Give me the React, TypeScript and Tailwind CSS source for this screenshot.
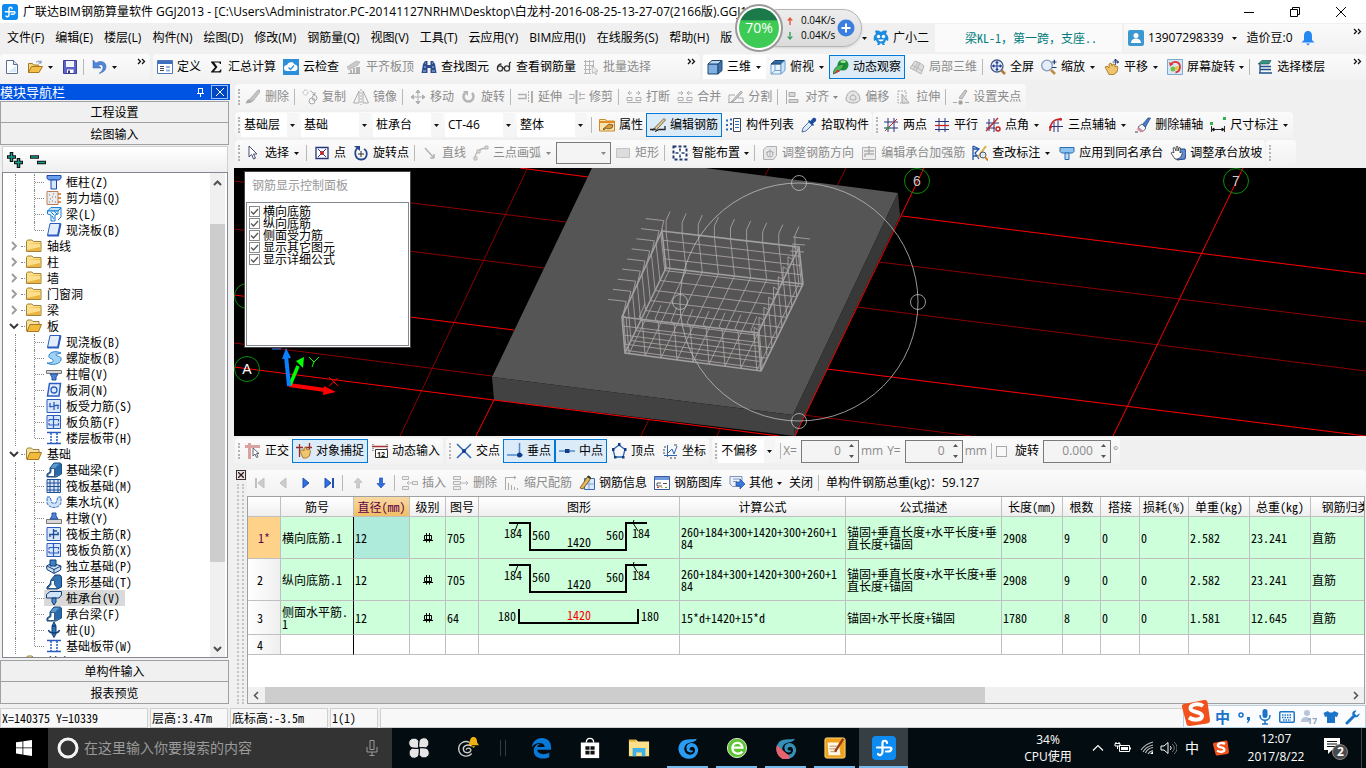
import { useState, type ReactNode } from 'react'

const SONG = "font-['Noto_Sans_Mono_CJK_SC','Noto_Sans_CJK_SC',monospace]"

/* ---------- 16x16 icons ---------- */

const icons: Record<string, ReactNode> = {
  fresh: (
    <>
      <path d="M2.500 1.500h7l4 4v9h-11z" fill="#fff" stroke="#5a6f96" />
      <path d="M9.500 1.500v4h4" fill="#cfe0f5" stroke="#5a6f96" />
      <path d="M4 13l8-6v6z" fill="#dbe8f8" />
    </>
  ),
  open: (
    <>
      <path d="M1.500 13.500V4.500h4l1 1.500h5v3" fill="#f7d77a" stroke="#a9791f" />
      <path d="M1.500 13.500l3-6h11l-3.500 6z" fill="#f3c14b" stroke="#a9791f" />
      <path d="M9 3.500c2-2 4-1.500 5 .5m0 0V1.500m0 2.500h-2.500" fill="none" stroke="#6b86b0" />
    </>
  ),
  save: (
    <>
      <path d="M1.500 1.500h13v13h-13z" fill="#5f63c9" stroke="#3c3f96" />
      <path d="M4 2h8v6H4z" fill="#f0f3fb" />
      <path d="M5 10.500h6.500V14H5z" fill="#fff" />
      <path d="M6 11.500h2V14H6z" fill="#30337e" />
    </>
  ),
  undo: <path d="M2 1v8h8L7.300 6.500C10 5 12.500 6 12 9c-.3 2.500-2 4-4 5.500 4.500-1 7-3.500 7-7 0-5-6.500-6.500-10-3.300z" fill="#4f86d8" stroke="#2a5eb0" strokeWidth=".5" />,
  define: (
    <>
      <path d="M.5 1.500h15v13H.5z" fill="#fff" stroke="#5077b8" />
      <path d="M1 2h14v3H1z" fill="#3e6fc0" />
      <path d="M3 7.500h4M3 9.500h4M3 11.500h4" stroke="#445" />
      <path d="M9 7h4v2H9zM9 10.500h4v2H9z" fill="#8fb0e4" />
    </>
  ),
  sigma: <path d="M3 2.500h10V5h-1c-.5-1.200-1-1.400-2-1.400H6.200L9.500 8 6 12.200h4.500c1 0 1.500-.6 1.800-1.700H13.500L13 13.500H3v-.8L7 8.300 3 3.200z" fill="#111" />,
  cloud: (
    <>
      <path d="M0 0h16v16H0z" fill="#2b8fd9" />
      <path d="M4 12a3 3 0 010-6 4 4 0 017.500-.5A3.300 3.300 0 0112 12z" fill="#fff" />
      <path d="M5.500 8.500l2 2 3.500-4" fill="none" stroke="#2b8fd9" strokeWidth="1.300" />
    </>
  ),
  flat: (
    <>
      <path d="M1 8l9-6 4 1-2 3-9 5z" fill="#c9c9c9" stroke="#aaa" strokeWidth=".6" />
      <path d="M4 11h2v3H4zM7 9h2v5H7zM10 8h4v6h-4z" fill="#b4b4b4" />
      <path d="M2 14.500h12" stroke="#aaa" />
    </>
  ),
  find: (
    <>
      <path d="M2 5l2-3h2.500v4h3V2H12l2 3 1.500 9H9.500V9h-3v5H.5z" fill="#2c4d8c" />
      <path d="M3 8h2M11 8h2M2 12h3M11 12h3M4 4h1M11 4h1" stroke="#a9c4ee" />
    </>
  ),
  glasses: (
    <g fill="none" stroke="#333" strokeWidth="1.300">
      <circle cx="4" cy="9.500" r="2.600" />
      <circle cx="11" cy="9.500" r="2.600" />
      <path d="M6.500 9h2M1.500 9c0-3 2-4 4-4M13.500 9V4l1.500-1" />
    </g>
  ),
  batch: (
    <>
      <path d="M1 2.500h10M1 6.500h10M1 10.500h7M1 14.500h7M2.500 1v14M6.500 1v14M10.500 1v7" stroke="#b5b5b5" />
      <path d="M9 7l6 5-2.500.3L14 15l-1.500.5-1-2.500-2 1.500z" fill="#eee" stroke="#aaa" strokeWidth=".7" />
    </>
  ),
  cube: (
    <>
      <path d="M1 5h10v10H1z" fill="#7fb2e2" stroke="#24466e" />
      <path d="M1 5l4-3.500h10L11 5z" fill="#b7d8f5" stroke="#24466e" />
      <path d="M11 5l4-3.500v10L11 15z" fill="#3a74ad" stroke="#24466e" />
    </>
  ),
  cubeTop: (
    <>
      <path d="M1 5h10v10H1z" fill="#eaf3fc" stroke="#6d9fd0" />
      <path d="M1 5l4-3.500h10L11 5z" fill="#2d6ba8" stroke="#24466e" />
      <path d="M11 5l4-3.500v10L11 15z" fill="#cfe3f6" stroke="#6d9fd0" />
      <path d="M5 11.500V6M5 11.500L1 15M5 11.500h6" stroke="#6d9fd0" />
    </>
  ),
  orbit: (
    <>
      <circle cx="10" cy="6" r="5.500" fill="#1f8f3a" />
      <path d="M7 2.500c2-2 5-1.500 6 0-1 2-4 2-6 0z" fill="#9be29b" />
      <path d="M0 15c1-6 5-10 11-10-1 5-5 8-11 10z" fill="#49b85a" stroke="#14602a" strokeWidth=".7" />
      <path d="M0 15l5-4.500 2 1.500-4 2z" fill="#d33" />
    </>
  ),
  localCube: (
    <g fill="#ddd" stroke="#b5b5b5">
      <path d="M1 9l5-7 5 2-4 8z" />
      <path d="M7 12l4-8 4 3-3 8z" />
      <path d="M3 6l6 3 4 3M4 11l5-8" fill="none" />
    </g>
  ),
  full: (
    <>
      <circle cx="7" cy="7" r="6" fill="#e8f0fb" stroke="#4a5c86" strokeWidth="1.300" />
      <path d="M11.500 11.500l3.500 3.500" stroke="#b07a37" strokeWidth="2.500" />
      <path d="M7 2.500v9M2.500 7h9M7 2.500L5.800 4h2.400zM7 11.500L5.800 10h2.400zM2.500 7L4 5.800v2.400zM11.500 7L10 5.800v2.400z" fill="#1c3f94" stroke="#1c3f94" />
    </>
  ),
  zoom: (
    <>
      <circle cx="6" cy="6.500" r="5.300" fill="#e4eefb" stroke="#8a9ab8" strokeWidth="1.300" />
      <path d="M10 11l4 4" stroke="#c08a3f" strokeWidth="2.500" />
      <path d="M11 3h4.500M13.300 .8v4.400M11 8.500h4.500" stroke="#1e3c78" strokeWidth="1.200" />
    </>
  ),
  pan: (
    <>
      <path d="M1 8l2-1 2 2V5l2-1 1 3 1-2 2 .5V8l2-1 1 1-1 5-3 2.500H5z" fill="#efc46c" stroke="#a06f1a" strokeWidth=".8" />
      <path d="M11.500 0v6M8.500 3h6M11.500 0l-1.200 1.500h2.400zM14.800 3l-1.500-1.200v2.400z" stroke="#23407e" fill="#23407e" strokeWidth=".8" />
    </>
  ),
  screenRot: (
    <>
      <path d="M.5.500h15v15H.5z" fill="#d5e8f7" stroke="#7fa9cc" />
      <circle cx="6" cy="10" r="2.500" fill="#6fbf4b" />
      <circle cx="10" cy="9" r="2" fill="#e8c53a" />
      <path d="M4 5c3-4 9-2 9 3 0 3-2 5-4.500 5.500" fill="none" stroke="#e03030" strokeWidth="1.800" />
      <path d="M2 3l1 4.500L6.500 5z" fill="#e03030" />
    </>
  ),
  floors: (
    <>
      <path d="M1 5l4-3.500h9L12 5z" fill="#2f9c7a" stroke="#1b3c6a" strokeWidth=".6" />
      <path d="M3 7.500h11M3 10.500h11M2 14h13" stroke="#1f4f8a" strokeWidth="1.600" />
      <path d="M3 5v9" stroke="#1f4f8a" strokeWidth="1.300" />
    </>
  ),
  gPen: (
    <>
      <path d="M5 10L13 1h1.500v2.500L8 12z" fill="#c4c4c4" stroke="#a9a9a9" strokeWidth=".8" />
      <path d="M4 10l4 2.500c-2 2-5 1.500-7.500 2 1-1.500 1-3.500 3.500-4.500z" fill="#aaa" />
    </>
  ),
  gCopy: (
    <g fill="none" stroke="#aaa">
      <circle cx="3.500" cy="3.500" r="2.500" strokeDasharray="1.500 1" />
      <circle cx="10" cy="12" r="3" />
      <circle cx="12.500" cy="9" r="2.500" />
      <path d="M8 1.500l5 4m0 0V3m0 2.500h-2.500" />
    </g>
  ),
  gMirror: (
    <g fill="none" stroke="#aaa">
      <path d="M6 2v12H.5zM10 2v12h5.500z" />
      <path d="M8 0v16" strokeDasharray="2 1" />
    </g>
  ),
  gMove: <path d="M8 1v14M1 8h14M8 1L6 3.500h4zM8 15l-2-2.500h4zM1 8l2.500-2v4zM15 8l-2.500-2v4z" fill="#b0b0b0" stroke="#b0b0b0" />,
  gRotate: (
    <>
      <path d="M4 4a5 5 0 107 0" fill="none" stroke="#b5b5b5" strokeWidth="2.500" />
      <path d="M2 2h5v5z" fill="#b5b5b5" />
    </>
  ),
  gExtend: (
    <g fill="none" stroke="#b0b0b0">
      <path d="M0 5.500h8V9.500H0" strokeWidth="1.300" />
      <path d="M10.500 2v12" strokeDasharray="2 1" />
      <path d="M14 2v12" strokeWidth="2" />
    </g>
  ),
  gTrim: (
    <g fill="none" stroke="#b0b0b0">
      <path d="M0 5.500h5v4H0M10 5.500h6M10 9.500h6" />
      <path d="M7.500 1v14" strokeWidth="2" />
      <path d="M11 3v9" strokeDasharray="2 1" />
    </g>
  ),
  gBreak: (
    <g fill="none" stroke="#aeaeae">
      <path d="M2 4h4M10 4h4M2 4l2-2M2 4l2 2M14 4l-2-2M14 4l-2 2M1 13.500h14" />
      <path d="M1 8.500h5v3H1zM10 8.500h5v3h-5z" />
    </g>
  ),
  gMerge: (
    <g fill="none" stroke="#aeaeae">
      <path d="M1 4h5M10 4h5M6 4L4 2M6 4L4 6M10 4l2-2M10 4l2 2M1 13.500h14" />
      <path d="M1 8.500h5v3H1zM10 8.500h5v3h-5z" />
    </g>
  ),
  gSplit: (
    <g fill="none" stroke="#a8a8a8">
      <path d="M0 13.500h16M1 6h6M10 9h5v4M1 6v7" />
      <path d="M3 13L13 2l1.500 1.500L6 12z" fill="#ccc" />
    </g>
  ),
  gAlign: (
    <g fill="#d8d8d8" stroke="#aaa">
      <path d="M1.500 1v14" />
      <path d="M4 3.500h6v4H4zM4 10.500h9v3H4z" />
    </g>
  ),
  gOffset: (
    <g fill="#e4e4e4" stroke="#a8a8a8">
      <path d="M1 11c0-5 3-9 7-9s7 4 7 9c-2 4-12 4-14 0z" />
      <path d="M5 10c0-2 1-4 3-4s3 2 3 4c-1 1.500-5 1.500-6 0z" />
    </g>
  ),
  gStretch: (
    <g fill="none" stroke="#aaa">
      <path d="M2 2h8v12H2z" strokeDasharray="2 1" />
      <path d="M6 5l7 9H6z" fill="#ddd" />
    </g>
  ),
  gGrip: (
    <g fill="none" stroke="#a8a8a8">
      <path d="M0 13.500h4M12 13.500h4" />
      <path d="M6 9L12 1l2 1-5 8z" fill="#ccc" />
      <path d="M6 12h3v3H6z" fill="#999" />
    </g>
  ),
  props: (
    <>
      <path d="M.5 2.500h6l1 1.500h8v10H.5z" fill="#fbe3ab" stroke="#c98b2b" />
      <path d="M1 5h14" stroke="#e08c28" strokeWidth="2" />
      <path d="M4 12l6-5 4 1-1 3-4 1-2-1-2 2z" fill="#d49a3c" stroke="#5b3d10" strokeWidth=".7" />
    </>
  ),
  editRebar: (
    <>
      <path d="M0 12.500h3M5 14.500l4-2h6V9" fill="none" stroke="#222" strokeWidth="1.300" />
      <path d="M4 11.500L14 1.500l1.500 1.500L6.500 12.500z" fill="#e8cf9a" stroke="#5b4a2a" strokeWidth=".8" />
      <path d="M2 14l1.500-3L6.500 12.500z" fill="#333" />
    </>
  ),
  list: (
    <>
      <path d="M0 3.500h2M0 8h2M0 12.500h2M4 2.500h2M4 7h2M4 12h2" stroke="#2f6ab8" strokeWidth="2" />
      <path d="M7.500 1.500h7v13h-7z" fill="#fff" stroke="#445" />
      <path d="M9 4.500h4M9 7.500h4M9 10.500h4" stroke="#2f6ab8" />
    </>
  ),
  picker: (
    <>
      <path d="M1 15l1-4 6-6 3 3-6 6z" fill="#dbeafa" stroke="#33528a" strokeWidth=".8" />
      <path d="M7 4l5 5 1-1-1-1.500L15 4c1-2-1-4-3-3L9.500 4 8 3z" fill="#1d4f9c" />
    </>
  ),
  twoPt: (
    <>
      <path d="M5 1v14M11 1v14M1 5h14M1 11h14" stroke="#26357c" />
      <path d="M2 14L14 2" stroke="#cc2222" />
      <circle cx="5" cy="11" r="1.600" fill="#1f9c3a" />
    </>
  ),
  parallel: (
    <>
      <path d="M5 1v14M11 1v14M1 4.500h14" stroke="#26357c" />
      <path d="M1 8.500h14" stroke="#cc2222" strokeWidth="1.300" />
      <path d="M1 12.500h14" stroke="#26357c" />
    </>
  ),
  angle: (
    <>
      <path d="M4 2v12M9 1v14M1 6h13M1 11h9" stroke="#26357c" />
      <path d="M1 14L13 1" stroke="#cc2222" strokeWidth="1.300" />
      <circle cx="13" cy="12" r="2" fill="none" stroke="#cc2222" strokeWidth="1.500" />
    </>
  ),
  threePt: (
    <>
      <path d="M6 5v10M10 3v12M2 9.500h13" stroke="#26357c" />
      <path d="M2 14C2 6 6 2 13 2" fill="none" stroke="#cc2222" strokeWidth="1.500" />
      <circle cx="12.500" cy="2.200" r="1.500" fill="#cc2222" />
      <circle cx="2.500" cy="10" r="1.500" fill="#cc2222" />
    </>
  ),
  eraseAxis: (
    <>
      <path d="M7 8L13 1h2.500L10 11z" fill="#4879c9" stroke="#22438a" strokeWidth=".7" />
      <path d="M3 10l4-3 4 4-3 3.500z" fill="#f1f4fa" stroke="#445" strokeWidth=".8" />
      <path d="M3 10l5 4.500-2 1-4-3z" fill="#d98a9a" />
      <path d="M0 15h3" stroke="#445" />
    </>
  ),
  dims: (
    <>
      <path d="M1.500 9v6M14.500 9v6M2 12.500h12M2 12.500l2-1.500v3zM14 12.500L12 11v3z" stroke="#111" fill="#111" strokeWidth=".9" />
      <path d="M0 5h3v3H0zM13 0h3v3h-3z" fill="#35b04a" />
    </>
  ),
  cursor: <path d="M4 1v11l2.700-2.500L8.500 14l2-.8-2-4.200H12z" fill="#fff" stroke="#444f70" />,
  point: (
    <>
      <path d="M2 2.500h12v11H2z" fill="#fff" stroke="#26357c" strokeWidth="1.300" />
      <path d="M4 4l8 8M12 4l-8 8" stroke="#26357c" />
      <circle cx="8" cy="8" r="2" fill="#cc2222" />
    </>
  ),
  rotPoint: (
    <>
      <path d="M5 3C1 5 1 14 8 14.500S15 6 11 4" fill="none" stroke="#26488f" strokeWidth="1.800" />
      <path d="M1 1h6v5z" fill="#26488f" />
      <path d="M8 6v6M5 9h6" stroke="#333" />
    </>
  ),
  gLine: <path d="M3 3l9 10m0 0V9m0 4H8" fill="none" stroke="#b5b5b5" strokeWidth="1.600" />,
  gArc: (
    <g stroke="#b5b5b5" fill="#ddd">
      <path d="M2 14C2 7 7 3 14 3" fill="none" strokeWidth="1.300" />
      <path d="M1 12h3v3H1zM4 5h3v3H4zM12 1h3v3h-3z" />
    </g>
  ),
  gRect: <path d="M1.500 3.500h13v9h-13z" fill="#dcdcdc" stroke="#c4c4c4" />,
  smart: (
    <>
      <path d="M1.500 1.500h13v13h-13z" fill="#fff" stroke="#223a70" strokeWidth="2" strokeDasharray="3 2" />
      <path d="M8 3.500v3M8 9.500v3M3.500 8h3M9.500 8h3" stroke="#223a70" strokeWidth="1.300" />
      <path d="M7 5l1-1.500L9 5zM7 11l1 1.500 1-1.500z" fill="#223a70" />
    </>
  ),
  gDir: (
    <g fill="#e6e6e6" stroke="#b0b0b0">
      <path d="M1.500 4.500L5 1.500h9.500v9l-3 4h-10z" />
      <path d="M8 4v8M4 8c2-2 6-2 8 0" fill="none" />
      <circle cx="8" cy="9" r="3" fill="none" />
    </g>
  ),
  gEdit: (
    <g fill="#eee" stroke="#b0b0b0">
      <path d="M1.500 2.500h13v12h-13z" />
      <path d="M8 1v8H4v3M8 9h5M3 6h10" fill="none" strokeWidth="1.500" />
    </g>
  ),
  checkDim: (
    <>
      <path d="M1 1v14M1 4h6M1 11h5M1 1l6 3-4 4 4 6" stroke="#2455a8" fill="none" strokeWidth="1.300" />
      <path d="M14 1L6 12" stroke="#d9b14a" strokeWidth="2" />
      <circle cx="11" cy="10" r="3" fill="#dcebfa" stroke="#555" />
      <path d="M13 12l3 3.500" stroke="#d08a2c" strokeWidth="2" />
    </>
  ),
  applyCap: (
    <>
      <path d="M1 2.500h14v4l-1.500 1.500h-11L1 6.500z" fill="#8cc4ef" stroke="#2a6db0" />
      <path d="M6 8h4v6.500H6z" fill="#b5daf6" stroke="#2a6db0" />
    </>
  ),
  slope: (
    <>
      <path d="M8 4h7l1 4-1 6-8 1z" fill="#5f8fd8" stroke="#1f478e" />
      <path d="M1 8l2-1 1 1-1-5 1.500-.5L6 6l.3-4.500h1.500L8 6l1-3.500 1.300.3L10 8l1.500-1 1 1-2 4.500-3 1.500H5z" fill="#fff" stroke="#333" strokeWidth=".8" />
    </>
  ),
  ortho: (
    <>
      <path d="M0 3.500h15M4.500 0v16" stroke="#d9a2a0" strokeWidth="3" />
      <path d="M8 5v8l2-2 1.500 3.500 1.500-.7-1.500-3.300H14z" fill="#fff" stroke="#556" strokeWidth=".9" />
    </>
  ),
  snap: (
    <>
      <path d="M0 4.500h7M3.500 1v13M13.500 0v6M9 4.500h7" stroke="#9b2b2b" strokeWidth="1.300" />
      <path d="M4 8l2-1.500L8 8V5l2-1 1 3 2-1 1.500 2-1 5-3 2H7z" fill="#efc66f" stroke="#94661b" strokeWidth=".8" />
    </>
  ),
  dyn: (
    <>
      <path d="M0 3.500h16" stroke="#a33" strokeWidth="1.500" />
      <path d="M1 1v8M15 1v8" stroke="#444" strokeDasharray="1 1" />
      <path d="M3.500 6.500h12v8h-12z" fill="#fff" stroke="#333" />
      <text x="5" y="13.500" fontSize="7" fontWeight="bold" fill="#111">12</text>
    </>
  ),
  cross: (
    <>
      <path d="M1 1l14 14M15 1L1 15" stroke="#2a66b5" strokeWidth="1.500" />
      <circle cx="8" cy="8" r="2" fill="#133d80" />
    </>
  ),
  perp: (
    <>
      <path d="M0 12h16M12.500 0v12" stroke="#4f8bd0" strokeWidth="1.500" />
      <circle cx="12.500" cy="12" r="2.500" fill="#133d80" />
    </>
  ),
  mid: (
    <>
      <path d="M0 8h16" stroke="#4f8bd0" strokeWidth="1.500" />
      <path d="M6 6h4.500v4H6z" fill="#133d80" />
    </>
  ),
  vertex: (
    <>
      <path d="M8 2l6 4.500-2 7.500H4L2 6.500z" fill="none" stroke="#2a66b5" strokeWidth="1.300" />
      <path d="M7 0h2.500v3H7zM1 5h2.500v3H1zM13 5h2.500v3H13zM3 13h2.500v2.500H3zM11 13h2.500v2.500H11z" fill="#133d80" />
    </>
  ),
  coord: (
    <>
      <path d="M5.500 2v12M2 12.500h13M6 10l4-4 2 5 3-8" fill="none" stroke="#2a66b5" />
      <path d="M2 4h2M1 7h2M1 10h2M12 2h3M8 15h2M12 15h2" stroke="#444" />
    </>
  ),
  first: (
    <g fill="#ccc" stroke="#c0c0c0">
      <path d="M4 3v10" strokeWidth="2" />
      <path d="M12 3v10L6 8z" />
    </g>
  ),
  prev: <path d="M11 3v10L5 8z" fill="#ccc" stroke="#c0c0c0" />,
  next: <path d="M5 3v10l6-5z" fill="#2d6fe0" stroke="#1d50b5" />,
  last: (
    <g fill="#2d6fe0" stroke="#1d50b5">
      <path d="M4 3v10l6-5z" />
      <path d="M12 3v10" strokeWidth="2" />
    </g>
  ),
  up: <path d="M8 3l4 4.500H9.500V13h-3V7.500H4z" fill="#ccc" stroke="#bbb" strokeWidth=".7" />,
  down: <path d="M8 13l4-4.500H9.500V3h-3v5.500H4z" fill="#2d6fe0" stroke="#1d50b5" strokeWidth=".7" />,
  gInsert: (
    <g fill="#eee" stroke="#b5b5b5">
      <path d="M.5 1.500h6v3h-6zM.5 11.500h6v3h-6zM10.500 6.500h5v3h-5z" />
      <path d="M10 8H5m0 0l2-2M5 8l2 2" fill="none" />
    </g>
  ),
  gDelete: (
    <g fill="#eee" stroke="#b5b5b5">
      <path d="M.5 1.500h7v3h-7zM.5 6.500h7v3h-7zM.5 11.500h7v3h-7z" />
      <path d="M8 8h7m0 0l-2-2m2 2l-2 2" fill="none" />
    </g>
  ),
  gScale: (
    <g fill="none" stroke="#aaa">
      <path d="M1.500 2v13M4.500 8v7M7.500 10v5M10.500 12v3M13.500 13v2M2 2.500h10m0 0l-2-1.500m2 1.500l-2 1.500" />
    </g>
  ),
  info: (
    <>
      <path d="M5.500 3.500h10v11h-10z" fill="#dce8f8" stroke="#3a6ab0" />
      <path d="M10 4v10M6 9h9" stroke="#7fa5dc" />
      <path d="M1 13L9 1l3 2-8 11z" fill="#e7b95a" stroke="#6a4a18" strokeWidth=".8" />
      <path d="M8 2l3 2 1-1.500L9.500.500z" fill="#333" />
    </>
  ),
  gallery: (
    <>
      <path d="M.5 1.500h15v13H.5z" fill="#fff" stroke="#38599b" />
      <path d="M1 2h14v3H1z" fill="#6f9add" />
      <path d="M3 8h4M3 8v3h5M9 8.500h4" stroke="#555" fill="none" />
      <path d="M3 12.500h2" stroke="#d33" /><path d="M7 12.500h2" stroke="#e8b93a" /><path d="M11 12.500h2" stroke="#39a845" />
    </>
  ),
  other: (
    <>
      <path d="M1 1.500h12v10H3.500L1 9z" fill="#eef3fb" stroke="#7c93bd" />
      <path d="M4 4h7M4 6.500h4" stroke="#7c93bd" />
      <path d="M7 7h4V4l5 5-5 5v-3H7z" fill="#3c78d8" stroke="#1d4b9e" strokeWidth=".7" />
    </>
  ),
  folder: (
    <>
      <path d="M.5 3.500l1-1.500h4.500l1.500 1.500h7.500v10H.5z" fill="#fbe08c" stroke="#9f823c" />
      <path d="M1 6l13.500-1v8H1z" fill="#eab541" />
      <path d="M1 6h13v3L1 12z" fill="#fbdf8d" />
    </>
  ),
  folderOpen: (
    <>
      <path d="M.5 13V3.500l1-1.500h4l1.500 1.500h6V6" fill="#f4e0a0" stroke="#9f823c" />
      <path d="M1 13.500l3-7h11.500l-3 7z" fill="#f2bb3c" stroke="#a8781c" />
    </>
  ),
  column: (
    <>
      <path d="M1 1.500h14v3l-2 1.500H3L1 4.500z" fill="#6ba0ea" stroke="#1c48a8" />
      <path d="M5 6h5.500v9H5z" fill="#d6e6fb" stroke="#1c48a8" />
    </>
  ),
  shear: (
    <>
      <path d="M1 1.500h11v13H1z" fill="#ececec" stroke="#c07a58" />
      <path d="M3 5h1M7 4h1M9 7h1M4 9h1M6 11h1M9 12h1M3 12h1M6 7h1" stroke="#777" />
      <path d="M12 4h3M12 8h3M12 12h3" stroke="#c8702e" strokeWidth="1.500" />
    </>
  ),
  beam: (
    <>
      <path d="M1.500 5L5 1.500h10L12 5z" fill="#bfe0fa" stroke="#1d7fd0" />
      <path d="M1.500 5H12v3l-3 1v6H5V9L1.500 8z" fill="#e6f4ff" stroke="#1d7fd0" />
      <path d="M5 6l3 3M8 5l3 3M6 10l2 3M12 5l3-3v9l-3 3" fill="none" stroke="#1d7fd0" />
    </>
  ),
  slab: (
    <>
      <path d="M4 1.500h10.500L12 13.500H1.500z" fill="#e3eefc" stroke="#2b5cc0" />
      <path d="M1.500 13.500h10.500l2.500-12" fill="none" stroke="#2b5cc0" strokeWidth="2" />
    </>
  ),
  spiral: <path d="M3 5c2-4 8-4 12-2-3 1-6 1-5 2 2 2 6 1 5 5-1 4-9 6-14 3 4 0 7-1 6-3C6 8 2 9 3 5z" fill="#9fd2f5" stroke="#2a82cc" />,
  capital: (
    <>
      <path d="M.5 4.500h15v3H.5z" fill="#d5d5d5" stroke="#777" />
      <path d="M4 8h8l-2 3v3H6v-3z" fill="#4f86d8" stroke="#214f9e" />
    </>
  ),
  slabHole: (
    <>
      <path d="M3.500 1.500h11l-1.500 12.500H1.500z" fill="#e3eefc" stroke="#2b5cc0" strokeWidth="1.500" />
      <circle cx="8" cy="8" r="3" fill="none" stroke="#2b5cc0" strokeWidth="1.300" />
    </>
  ),
  slabBar: (
    <>
      <path d="M1 1.500h13.500v13H1z" fill="#d9e7fb" stroke="#2b5cc0" />
      <path d="M8 4v8M3 8c2 3 8-3 10 0M4 5v3M12 8v3" fill="none" stroke="#2b5cc0" strokeWidth="1.300" />
    </>
  ),
  slabNeg: (
    <>
      <path d="M1 1.500h13.500v13H1z" fill="#d9e7fb" stroke="#2b5cc0" />
      <path d="M7.500 2v12M3 5.500h9.500v2M3 7.500v-2M3 11h9.500V9M3 9v2" fill="none" stroke="#2b5cc0" strokeWidth="1.200" />
    </>
  ),
  strip: (
    <>
      <path d="M1 2.500h14M1 13.500h14" stroke="#2b5cc0" strokeWidth="1.500" />
      <path d="M5 3v10M11 3v10" stroke="#2b5cc0" strokeDasharray="2 1" strokeWidth="1.500" />
    </>
  ),
  fBeam: (
    <>
      <path d="M1 15v-3l3-2V6l4-5h6l1.500 1v10L10 15z" fill="#5b9bd5" stroke="#123f74" />
      <path d="M9 14V6l5-5 1.500 1v10z" fill="#2a68a8" />
      <path d="M2 14.500v-2l3-2V6.500h3.500v8z" fill="#fff" stroke="#123f74" strokeWidth=".8" />
    </>
  ),
  raft: (
    <>
      <path d="M1 1.500h13.500v13H1z" fill="#d9e7fb" stroke="#1f4f96" />
      <path d="M4 2v12M8 2v12M12 2v12M1 5h13M1 8.500h13M1 12h13" stroke="#1f4f96" />
    </>
  ),
  pit: <path d="M1 3h3l2 6h4l2-6h3v6c-2 6-12 6-14 0z" fill="#cfe2f8" stroke="#2b6cc0" strokeDasharray="3 1" />,
  pier: (
    <>
      <path d="M.5 9.500h15v4H.5z" fill="#d8d8d8" stroke="#777" />
      <path d="M4 9l2-3V3h4v3l2 3z" fill="#4f86d8" stroke="#214f9e" />
    </>
  ),
  raftMain: (
    <>
      <path d="M1 1.500h13.500v13H1z" fill="#d9e7fb" stroke="#2b5cc0" />
      <path d="M7.500 3v10M7.500 5H11M3 8.500h10M4 8.500V11M12 8.500V6" fill="none" stroke="#1f4f96" strokeWidth="1.300" />
    </>
  ),
  isolated: (
    <>
      <path d="M.5 8L6 5l9 3-.5 4L8 15.500 1 11.500z" fill="#c9e0f7" stroke="#123f74" />
      <path d="M4 2h6v6H4z" fill="#3c83c6" stroke="#123f74" />
      <path d="M1 8l7 3.500 7-3.500M8 11.500V15" fill="none" stroke="#123f74" />
    </>
  ),
  stripF: (
    <>
      <path d="M1 15v-2l3-3 1-4 4-5h5l1.500 2v10l-4 2z" fill="#2f74b5" stroke="#123f74" />
      <path d="M1.500 14.500l3.500-4V6.500h3.500v4l3 4z" fill="#fff" stroke="#123f74" strokeWidth=".8" />
    </>
  ),
  cap: (
    <>
      <path d="M.5 4.500L4 1.500h11.500v3.500L13 8H.5z" fill="#cfe4f8" stroke="#123f74" />
      <path d="M6 8h4v4l-2 3-2-3z" fill="#4c8bcb" stroke="#123f74" />
    </>
  ),
  pile: (
    <>
      <path d="M8 0l2 4H6zM6 4h4v8l-2 3.500L6 12z" fill="#2f74b5" stroke="#123f74" />
      <path d="M2.500 8c1 4 10 4 11 0" fill="none" stroke="#123f74" strokeWidth="1.500" />
    </>
  ),
}

function Icon({ name }: { name: string }) {
  return (
    <svg viewBox="0 0 16 16" className="h-4 w-4 shrink-0" aria-hidden="true">
      {icons[name]}
    </svg>
  )
}

function Caret({ gray = false }: { gray?: boolean }) {
  return (
    <svg viewBox="0 0 5 3" className="h-[3px] w-[5px] shrink-0" aria-hidden="true">
      <path d="M0 0h5L2.500 3z" fill={gray ? '#888' : '#111'} />
    </svg>
  )
}

/* ---------- toolbar parts ---------- */

interface ToolProps {
  icon?: string
  label?: string
  off?: boolean
  active?: boolean
  caret?: 'menu' | 'split'
}

function Tool({ icon, label, off, active, caret }: ToolProps) {
  return (
    <button
      type="button"
      aria-label={label ?? icon}
      className={`flex h-6 shrink-0 items-center whitespace-nowrap ${off ? 'text-[#8b8b8b]' : 'text-black'} ${
        active ? 'border border-[#0078d7] bg-[#dcebf8] px-[3px]' : caret ? 'pl-1' : 'pr-[3px] pl-1'
      }`}
    >
      {icon && <Icon name={icon} />}
      {label && <span className={icon ? 'pl-1' : ''}>{label}</span>}
      {caret && (
        <span className={`flex justify-center ${caret === 'menu' ? 'w-3' : 'w-[15px]'}`}>
          <Caret gray={off} />
        </span>
      )}
    </button>
  )
}

function Sep() {
  return <span className="mr-[3px] ml-0.5 h-4 w-px shrink-0 bg-[#b8b8b8]" />
}

function Grip() {
  return <span className="mr-px ml-[3px] h-4 shrink-0 border-l-2 border-dotted border-[#b4b4b4]" />
}

function Strip({ children, className = '' }: { children: ReactNode; className?: string }) {
  return (
    <div className={`flex h-[26px] shrink-0 items-center rounded-sm bg-linear-to-b from-[#fbfbfb] to-[#f2f2f2] ${className}`}>
      {children}
    </div>
  )
}

function Combo({ label, value, wide = true }: { label: string; value: string; wide?: boolean }) {
  return (
    <span className={`relative mr-[3px] flex h-6 shrink-0 items-center bg-white ${wide ? 'w-[69px]' : 'w-[57px]'}`}>
      <select aria-label={label} defaultValue={value} className="h-full w-full appearance-none bg-transparent pl-[3px] outline-none">
        <option>{value}</option>
      </select>
      <span className="pointer-events-none absolute inset-y-0 right-0 flex w-[11px] items-center justify-center bg-[#f5f5f5]">
        <Caret />
      </span>
    </span>
  )
}

function More() {
  return (
    <svg viewBox="0 0 9 7" className="mt-1 mr-1 ml-auto h-[7px] w-[9px] shrink-0 self-start" aria-hidden="true">
      <path d="M1 1l2.500 2.500L1 6M5 1l2.500 2.500L5 6" fill="none" stroke="#111" strokeWidth="1.300" />
    </svg>
  )
}

/* ---------- title, menu ---------- */

function GLogo({ className }: { className: string }) {
  return (
    <svg viewBox="0 0 24 24" className={className} aria-hidden="true">
      <rect width="24" height="24" rx="4" fill="#0d8bf0" />
      <path d="M15 7c0-3-4.500-3-4.500 0v9c0 3-3 4-4.500 2M5 11.500h13c2.500 0 1.500 4-2 4h-2" fill="none" stroke="#fff" strokeWidth="2.200" strokeLinecap="round" />
    </svg>
  )
}

function TitleBar() {
  return (
    <header className="flex h-[23px] shrink-0 items-center bg-white pl-0.5">
      <GLogo className="h-4 w-4 shrink-0" />
      <h1 className="ml-[5px] truncate">
        广联达BIM钢筋算量软件 GGJ2013 - [C:\Users\Administrator.PC-20141127NRHM\Desktop\白龙村-2016-08-25-13-27-07(2166版).GGJ12]
      </h1>
      <div className="ml-auto flex shrink-0">
        <button type="button" aria-label="最小化" className="flex h-5 w-[46px] items-center justify-center">
          <svg viewBox="0 0 10 10" className="h-2.5 w-2.5"><path d="M0 5.500h10" stroke="#000" /></svg>
        </button>
        <button type="button" aria-label="还原" className="flex h-5 w-[46px] items-center justify-center">
          <svg viewBox="0 0 10 10" className="h-2.5 w-2.5"><path d="M.5 2.500h7v7h-7zM2.500 2.500v-2h7v7h-2" fill="none" stroke="#000" /></svg>
        </button>
        <button type="button" aria-label="关闭窗口" className="mr-0.5 flex h-5 w-[46px] items-center justify-center">
          <svg viewBox="0 0 10 10" className="h-2.5 w-2.5"><path d="M0 0l10 10M10 0L0 10" stroke="#000" /></svg>
        </button>
      </div>
    </header>
  )
}

const menus = ['文件(F)', '编辑(E)', '楼层(L)', '构件(N)', '绘图(D)', '修改(M)', '钢筋量(Q)', '视图(V)', '工具(T)', '云应用(Y)', 'BIM应用(I)', '在线服务(S)', '帮助(H)', '版']

function MenuBar() {
  return (
    <div className="flex h-[30px] shrink-0 items-center">
      <nav className="flex w-[858px] shrink-0 items-center gap-[11px] overflow-hidden pl-[7px]">
        {menus.map((m) => (
          <button key={m} type="button" className="whitespace-nowrap">{m}</button>
        ))}
      </nav>
      <span className="mr-1.5 ml-1"><Caret /></span>
      <button type="button" className="mr-1.5 flex shrink-0 items-center gap-1">
        <svg viewBox="0 0 16 16" className="h-4 w-4" aria-hidden="true">
          <path d="M2 1c2-1 5 0 6 1 1-1 4-2 6-1l-1 3c2 1 3 4 2 7l-2-1c-.5 2-1.500 3-2 3l1 2H9.500l-.5-1.500H7L6.500 15H4l1-2c-.5 0-1.500-1-2-3l-2 1c-1-3 0-6 2-7z" fill="#1c8ce0" />
          <circle cx="5.500" cy="6.500" r="1.700" fill="#fff" /><circle cx="10.500" cy="6.500" r="1.700" fill="#fff" />
          <path d="M5 9.500c1.500 2.500 4.500 2.500 6 0z" fill="#fff" />
        </svg>
        广小二
      </button>
      <a href="#faq" className={`flex h-7 w-[187px] shrink-0 items-center bg-[#fafafa] pl-[30px] text-[#007c7c] ${SONG}`}>
        梁KL-1，第一跨，支座..
      </a>
      <div className="ml-0.5 flex h-7 flex-1 items-center bg-linear-to-b from-[#fafafa] to-[#f2f2f2] pl-1">
        <svg viewBox="0 0 16 16" className="h-4 w-4 shrink-0" aria-hidden="true">
          <rect width="16" height="16" rx="2" fill="#3d97d0" />
          <circle cx="8" cy="5.500" r="2.500" fill="#fff" />
          <path d="M3 13c0-3 2-4.500 5-4.500s5 1.500 5 4.500z" fill="#fff" />
        </svg>
        <button type="button" className="ml-1 flex items-center gap-2">13907298339 <Caret /></button>
        <span className="ml-2.5 whitespace-nowrap">造价豆:0</span>
        <svg viewBox="0 0 14 16" className="ml-2 h-4 w-3.5 shrink-0" aria-label="通知">
          <path d="M7 1c3 0 4 2.500 4 5v4l2.500 2.500H.5L3 10V6c0-2.500 1-5 4-5zM5 13.500h4L7 15.500z" fill="#2588f2" />
        </svg>
        <More />
      </div>
    </div>
  )
}

function MainToolbar() {
  return (
    <div className="mb-[3px] flex h-7 shrink-0 items-center gap-[3px]">
      <Strip className="w-[150px]">
        <Tool icon="fresh" />
        <Tool icon="open" caret="split" />
        <Tool icon="save" />
        <Sep />
        <Tool icon="undo" caret="split" />
        <More />
      </Strip>
      <Strip className="w-[547px]">
        <Tool icon="define" label="定义" />
        <Tool icon="sigma" label="汇总计算" />
        <Tool icon="cloud" label="云检查" />
        <Tool icon="flat" label="平齐板顶" off />
        <Tool icon="find" label="查找图元" />
        <Tool icon="glasses" label="查看钢筋量" />
        <Tool icon="batch" label="批量选择" off />
        <More />
      </Strip>
      <Strip className="flex-1">
        <span className="flex h-6 bg-white"><Tool icon="cube" label="三维" caret="split" /></span>
        <Tool icon="cubeTop" label="俯视" caret="split" />
        <Tool icon="orbit" label="动态观察" active />
        <Tool icon="localCube" label="局部三维" off />
        <Sep />
        <Tool icon="full" label="全屏" />
        <Tool icon="zoom" label="缩放" caret="split" />
        <Tool icon="pan" label="平移" caret="split" />
        <Tool icon="screenRot" label="屏幕旋转" caret="menu" />
        <Sep />
        <Tool icon="floors" label="选择楼层" />
        <More />
      </Strip>
    </div>
  )
}

function EditToolbars() {
  return (
    <div className="flex shrink-0 flex-col gap-0.5 pb-0.5 pl-px">
      <Strip className="self-start pr-0.5">
        <Grip />
        <Tool icon="gPen" label="删除" off />
        <Sep />
        <Tool icon="gCopy" label="复制" off />
        <Tool icon="gMirror" label="镜像" off />
        <Sep />
        <Tool icon="gMove" label="移动" off />
        <Tool icon="gRotate" label="旋转" off />
        <Sep />
        <Tool icon="gExtend" label="延伸" off />
        <Tool icon="gTrim" label="修剪" off />
        <Sep />
        <Tool icon="gBreak" label="打断" off />
        <Tool icon="gMerge" label="合并" off />
        <Tool icon="gSplit" label="分割" off />
        <Sep />
        <Tool icon="gAlign" label="对齐" off caret="menu" />
        <Tool icon="gOffset" label="偏移" off />
        <Tool icon="gStretch" label="拉伸" off />
        <Sep />
        <Tool icon="gGrip" label="设置夹点" off />
      </Strip>
      <div className="flex gap-px">
        <Strip>
          <Grip />
          <Combo label="楼层" value="基础层" wide={false} />
          <Combo label="构件大类" value="基础" />
          <Combo label="构件类型" value="桩承台" />
          <Combo label="构件" value="CT-46" />
          <Combo label="分层" value="整体" />
          <Sep />
          <Tool icon="props" label="属性" />
          <Tool icon="editRebar" label="编辑钢筋" active />
          <Tool icon="list" label="构件列表" />
          <Tool icon="picker" label="拾取构件" />
        </Strip>
        <Strip>
          <Grip />
          <Tool icon="twoPt" label="两点" />
          <Tool icon="parallel" label="平行" />
          <Tool icon="angle" label="点角" caret="split" />
          <Tool icon="threePt" label="三点辅轴" caret="split" />
          <Tool icon="eraseAxis" label="删除辅轴" />
          <Tool icon="dims" label="尺寸标注" caret="split" />
        </Strip>
      </div>
      <div className="flex gap-px">
        <Strip>
          <Grip />
          <Tool icon="cursor" label="选择" caret="split" />
          <Sep />
          <Tool icon="point" label="点" />
          <Tool icon="rotPoint" label="旋转点" />
          <Sep />
          <Tool icon="gLine" label="直线" off />
          <Tool icon="gArc" label="三点画弧" off caret="split" />
          <span className="relative flex h-[22px] w-[55px] items-center border border-[#7a7a7a] bg-[#f4f4f4]">
            <select aria-label="画弧方式" className="h-full w-full appearance-none outline-none" />
            <span className="pointer-events-none absolute right-1"><Caret gray /></span>
          </span>
          <Tool icon="gRect" label="矩形" off />
          <Sep />
          <Tool icon="smart" label="智能布置" caret="menu" />
          <Sep />
          <Tool icon="gDir" label="调整钢筋方向" off />
          <Tool icon="gEdit" label="编辑承台加强筋" off />
          <Tool icon="checkDim" label="查改标注" caret="split" />
          <Tool icon="applyCap" label="应用到同名承台" />
          <Tool icon="slope" label="调整承台放坡" />
        </Strip>
        <Strip className="w-[30px]">
          <Grip />
        </Strip>
      </div>
    </div>
  )
}

/* ---------- navigation tree ---------- */

interface Node {
  icon: string
  label: string
  state?: 'open' | 'closed'
  last?: boolean
  selected?: boolean
}

const tree: Node[] = [
  { icon: 'column', label: '框柱(Z)' },
  { icon: 'shear', label: '剪力墙(Q)' },
  { icon: 'beam', label: '梁(L)' },
  { icon: 'slab', label: '现浇板(B)', last: true },
  { icon: 'folder', label: '轴线', state: 'closed' },
  { icon: 'folder', label: '柱', state: 'closed' },
  { icon: 'folder', label: '墙', state: 'closed' },
  { icon: 'folder', label: '门窗洞', state: 'closed' },
  { icon: 'folder', label: '梁', state: 'closed' },
  { icon: 'folderOpen', label: '板', state: 'open' },
  { icon: 'slab', label: '现浇板(B)' },
  { icon: 'spiral', label: '螺旋板(B)' },
  { icon: 'capital', label: '柱帽(V)' },
  { icon: 'slabHole', label: '板洞(N)' },
  { icon: 'slabBar', label: '板受力筋(S)' },
  { icon: 'slabNeg', label: '板负筋(F)' },
  { icon: 'strip', label: '楼层板带(H)', last: true },
  { icon: 'folderOpen', label: '基础', state: 'open' },
  { icon: 'fBeam', label: '基础梁(F)' },
  { icon: 'raft', label: '筏板基础(M)' },
  { icon: 'pit', label: '集水坑(K)' },
  { icon: 'pier', label: '柱墩(Y)' },
  { icon: 'raftMain', label: '筏板主筋(R)' },
  { icon: 'slabNeg', label: '筏板负筋(X)' },
  { icon: 'isolated', label: '独立基础(P)' },
  { icon: 'stripF', label: '条形基础(T)' },
  { icon: 'cap', label: '桩承台(V)', selected: true },
  { icon: 'fBeam', label: '承台梁(F)' },
  { icon: 'pile', label: '桩(U)' },
  { icon: 'strip', label: '基础板带(W)', last: true },
  { icon: 'folder', label: '其它', state: 'closed' },
]

function TreeRow({ node }: { node: Node }) {
  if (node.state) {
    return (
      <li className="flex h-4 items-center pl-[5px]">
        <svg viewBox="0 0 12 12" className="h-3 w-3 shrink-0" aria-hidden="true">
          {node.state === 'open' ? (
            <path d="M2 4l4 4 4-4" fill="none" stroke="#333" strokeWidth="1.800" />
          ) : (
            <path d="M4 2l4 4-4 4" fill="none" stroke="#999" strokeWidth="1.800" />
          )}
        </svg>
        <span className="mr-px ml-px w-1 border-t border-dotted border-[#888]" />
        <Icon name={node.icon} />
        <span className="ml-[5px] leading-4">{node.label}</span>
      </li>
    )
  }
  return (
    <li className="flex h-4 items-center pl-3">
      <span className="h-4 w-[19px] border-l border-dotted border-[#888]" />
      <span className={`border-l border-dotted border-[#888] ${node.last ? 'mb-2 h-2' : 'h-4'}`} />
      <span className="w-[9px] border-t border-dotted border-[#888]" />
      <span className={`flex h-4 items-center pr-[5px] pl-0.5 ${node.selected ? 'bg-[#d9d9d9]' : ''}`}>
        <Icon name={node.icon} />
        <span className="ml-1 leading-4">{node.label}</span>
      </span>
    </li>
  )
}

function NavButton({ children }: { children: ReactNode }) {
  return (
    <button type="button" className="h-[22px] w-full shrink-0 border border-[#a0a0a0] bg-[#f0f0f0] leading-5 not-first:border-t-0">
      {children}
    </button>
  )
}

function NavPanel() {
  return (
    <aside className={`flex w-[230px] shrink-0 flex-col ${SONG}`}>
      <div className="flex h-4 shrink-0 items-center bg-[#0054e3] text-[13px] leading-4 text-white">
        模块导航栏
        <svg viewBox="0 0 9 10" className="ml-auto h-2.5 w-[9px]" aria-label="固定">
          <path d="M2.500 1v5M6.500 1v5M2 1.500h5M1 6.500h7M4.500 7v3" fill="none" stroke="#fff" />
        </svg>
        <button type="button" aria-label="关闭导航栏" className="mr-0.5 ml-1.5 flex h-3.5 w-[17px] items-center justify-center border border-[#9dbcf5] bg-[#0047c4]">
          <svg viewBox="0 0 8 8" className="h-2 w-2"><path d="M0 0l8 8M8 0L0 8" stroke="#fff" /></svg>
        </button>
      </div>
      <div className="mt-px mr-px flex flex-col">
        <NavButton>工程设置</NavButton>
        <NavButton>绘图输入</NavButton>
      </div>
      <div className="mx-0.5 mt-px flex h-[26px] shrink-0 items-center border border-b-0 border-[#d0d0d0] bg-linear-to-b from-white to-[#efefef] pl-1">
        <svg viewBox="0 0 40 16" className="h-4 w-10" aria-label="展开与折叠">
          <g stroke="#111" strokeWidth="3.500"><path d="M0 5h9M4.500 0v10M7 10.500h9M11.500 6v10M23 5h9M30 10.500h9" /></g>
          <g stroke="#12a08c" strokeWidth="1.300"><path d="M1 5h7M4.500 1v8M8 10.500h7M11.500 7v8M24 5h7M31 10.500h7" /></g>
        </svg>
      </div>
      <div className="mx-0.5 flex min-h-0 flex-1 border border-[#828790] bg-white">
        <ul className="min-w-0 flex-1 overflow-hidden pt-px">
          {tree.map((n, i) => (
            <TreeRow key={i} node={n} />
          ))}
        </ul>
        <div className="mr-0.5 flex w-[15px] flex-col items-center bg-[#f0f0f0]">
          <svg viewBox="0 0 9 9" className="mt-1.5 h-[9px] w-[9px] shrink-0"><path d="M1 6l3.500-3.500L8 6" fill="none" stroke="#505050" strokeWidth="2" /></svg>
          <div className="mt-9 h-[338px] w-full bg-[#cdcdcd]" />
          <svg viewBox="0 0 9 9" className="mt-auto mb-1 h-[9px] w-[9px] shrink-0"><path d="M1 3l3.500 3.500L8 3" fill="none" stroke="#505050" strokeWidth="2" /></svg>
        </div>
      </div>
      <div className="mt-0.5 mr-px flex flex-col">
        <NavButton>单构件输入</NavButton>
        <NavButton>报表预览</NavButton>
      </div>
    </aside>
  )
}

/* ---------- 3D view ---------- */

type Pt = [number, number]
const mix = (a: Pt, b: Pt, t: number): Pt => [a[0] + (b[0] - a[0]) * t, a[1] + (b[1] - a[1]) * t]
const seg = (...p: Pt[]) => 'M' + p.map((q) => q.map((v) => v.toFixed(1)).join(' ')).join('L')

// corners of the rebar cage: back/front, left/right, top/bottom
const BLT: Pt = [662, 231]
const BRT: Pt = [799, 247]
const BLB: Pt = [666, 268]
const BRB: Pt = [803, 284]
const FLT: Pt = [622, 317]
const FRT: Pt = [758, 333]
const FLB: Pt = [625, 353]
const FRB: Pt = [761, 371]

function cagePath() {
  const out: string[] = []
  for (let i = 0; i < 9; i++) {
    const t = 0.03 + (i * 0.94) / 8
    // bottom mesh
    out.push(seg(mix(BLB, BRB, t), mix(FLB, FRB, t)))
    out.push(seg(mix(BLB, FLB, t), mix(BRB, FRB, t)))
    // back bars with bent tips
    const top = mix(BLT, BRT, t)
    out.push(seg(mix(BLB, BRB, t), top, [top[0], top[1] - 11], [top[0] + 4, top[1] - 20]))
    // left bars with bent tips
    const left = mix(BLT, FLT, t)
    out.push(seg(mix(BLB, FLB, t), left, [left[0] + 3, left[1] - 13], [left[0] - 15, left[1] - 15]))
    // right bars
    const right = mix(BRT, FRT, t)
    out.push(seg(mix(BRB, FRB, t), right, [right[0] - 5, right[1] - 3], [right[0] - 5, right[1] + 9]))
    // front ticks
    const f = mix(FLT, FRT, t)
    out.push(seg(mix(FLB, FRB, t), f, [f[0] - 3, f[1] - 2], [f[0] + 3, f[1] - 16]))
  }
  for (let j = 1; j < 4; j++) {
    const t = j / 4
    out.push(seg(mix(BLT, BLB, t), mix(BRT, BRB, t)))
    out.push(seg(mix(FLT, FLB, t), mix(FRT, FRB, t)))
  }
  out.push('M793 237l17 2M792 244l13 1M790 251l14 1')
  return out.join('')
}

const checks = ['横向底筋', '纵向底筋', '侧面受力筋', '显示其它图元', '显示详细公式']

function DisplayPanel() {
  return (
    <section className="absolute top-[3px] left-2.5 flex h-[177px] w-[167px] flex-col border border-[#444] bg-white">
      <h2 className="h-[30px] shrink-0 pl-[7px] leading-7 text-[#999]">钢筋显示控制面板</h2>
      <div className={`m-px mt-0 flex-1 border border-[#828790] pt-0.5 ${SONG}`}>
        {checks.map((c) => (
          <label key={c} className="flex h-3 items-center gap-[3px] pl-0.5 leading-3">
            <input
              type="checkbox"
              defaultChecked
              className="absolute h-[11px] w-[11px] appearance-none border border-[#8a8a8a] bg-white"
            />
            <svg viewBox="0 0 11 11" className="relative h-[11px] w-[11px]" aria-hidden="true">
              <path d="M2 5.500l2.500 2.500L9 3" fill="none" stroke="#555" strokeWidth="1.300" />
            </svg>
            {c}
          </label>
        ))}
      </div>
    </section>
  )
}

function Viewport() {
  return (
    <main className="relative min-h-0 flex-1 overflow-hidden bg-black">
      <svg viewBox="234 168 1132 268" preserveAspectRatio="xMinYMin slice" className="block h-full w-full" aria-label="三维视图">
        <g stroke="#8b0000" fill="none">
          <path d="M234 181L566 222M234 229L544 268M234 343L492 376M527 169L400 436M649 419L641 436M720 429L717 436M769 168L765 176M846 168L837 186" />
          <path d="M879 262L1366 322M857 307L1366 371M803 415L972 436" />
        </g>
        <g stroke="#ff0000" fill="none">
          <path d="M520 168L588 177M234 295L514 330M234 367L494 400M494 400L476 436M902 216L1366 274M827 369L1366 436M1243 168L1113 436" />
        </g>
        <path d="M592 168L492 377 793 415 898 193 705 168z" fill="#555" />
        <path d="M492 377L494 400 795 436 793 415z" fill="#424242" />
        <path d="M898 193L900 216 795 436 793 415z" fill="#383838" />
        <path d="M494 400L779 436M924 168L795 436" stroke="#ff0000" fill="none" />
        <path d={cagePath()} stroke="#b3a9a9" strokeOpacity=".8" strokeWidth="1" fill="none" />
        <path
          d={seg(BLT, BRT, BRB, FRB, FLB, FLT, BLT, BLB, BRB) + seg(FLT, FRT, FRB) + seg(FRT, BRT) + seg(BLB, FLB)}
          stroke="#a0a0a0"
          strokeWidth="1.600"
          fill="none"
        />
        <g stroke="#bdbdbd" strokeWidth="1" strokeOpacity=".8" fill="none">
          <circle cx="799" cy="302" r="119" />
          <circle cx="799" cy="183" r="7.500" />
          <circle cx="918" cy="302" r="7.500" />
          <circle cx="799" cy="421" r="7.500" />
          <circle cx="680" cy="302" r="7.500" />
        </g>
        <g fill="none" stroke="#0a8f0a">
          <circle cx="917" cy="181" r="12.500" />
          <circle cx="1236" cy="181" r="12.500" />
          <circle cx="247" cy="369" r="12.500" />
          <circle cx="247" cy="296" r="12.500" />
        </g>
        <g fill="#ccc" fontSize="14" textAnchor="middle" fontFamily="Liberation Sans, sans-serif">
          <text x="917" y="186">6</text>
          <text x="1236" y="186">7</text>
          <text x="247" y="374" fill="#fff">A</text>
        </g>
        <path d="M289 385L325 390" stroke="#f00" strokeWidth="4" />
        <path d="M324 386L336 392 323 395z" fill="#f00" />
        <path d="M290 385L298 366" stroke="#0f0" strokeWidth="3.500" />
        <path d="M296 361L304 357 303 368z" fill="#0f0" />
        <path d="M289 386L286 356" stroke="#0a80ff" strokeWidth="4" />
        <path d="M282 359L286 348 291 358z" fill="#0a80ff" />
        <path d="M309 357L314 362 319 357M314 362L312 367" stroke="#0f0" fill="none" />
        <path d="M329 377L338 386M338 378L329 386" stroke="#f00" />
        <path d="M272 349h9" stroke="#0a80ff" />
      </svg>
      <DisplayPanel />
    </main>
  )
}

/* ---------- snap bar ---------- */

function Spin({ label, value, wide }: { label: string; value: string; wide?: boolean }) {
  return (
    <span className={`flex h-[23px] shrink-0 items-center border border-[#7a7a7a] bg-[#f4f4f4] ${wide ? 'w-[68px]' : 'w-[58px]'}`}>
      <input aria-label={label} defaultValue={value} className="w-full min-w-0 bg-transparent pr-2 text-right text-[#8b8b8b] outline-none" />
      <svg viewBox="0 0 5 16" className="mr-1 h-4 w-[5px] shrink-0" aria-hidden="true">
        <path d="M0 4h5L2.500 1zM0 12h5l-2.500 3z" fill="#555" />
      </svg>
    </span>
  )
}

function SnapBar() {
  return (
    <div className="mb-1 flex h-[30px] shrink-0 items-center gap-[3px] pl-px">
      <Strip>
        <Grip />
        <Tool icon="ortho" label="正交" />
        <Tool icon="snap" label="对象捕捉" active />
        <Tool icon="dyn" label="动态输入" />
      </Strip>
      <Strip>
        <Grip />
        <Tool icon="cross" label="交点" />
        <Tool icon="perp" label="垂点" active />
        <Tool icon="mid" label="中点" active />
        <Tool icon="vertex" label="顶点" />
        <Tool icon="coord" label="坐标" />
      </Strip>
      <Strip className="text-[#8b8b8b]">
        <Grip />
        <span className="flex text-black"><Combo label="偏移方式" value="不偏移" wide={false} /></span>
        <span className="mr-0.5 ml-0.5 h-4 w-px bg-[#b8b8b8]" />
        <span className="mr-1">X=</span>
        <Spin label="X 偏移" value="0" />
        <span className="mr-1 ml-0.5">mm</span>
        <span className="mr-1">Y=</span>
        <Spin label="Y 偏移" value="0" />
        <span className="mr-1 ml-0.5">mm</span>
        <span className="h-4 w-px bg-[#b8b8b8]" />
        <label className="flex items-center gap-2 px-1 text-black">
          <input type="checkbox" className="h-[11px] w-[11px] appearance-none border border-[#aaa] bg-[#f8f8f8]" />
          旋转
        </label>
        <Spin label="旋转角度" value="0.000" wide />
        <span className="mx-0.5">°</span>
      </Strip>
    </div>
  )
}

/* ---------- rebar detail table ---------- */

function DetailToolbar() {
  return (
    <Strip className="pl-px">
      <Tool icon="first" />
      <Tool icon="prev" />
      <Tool icon="next" />
      <Tool icon="last" />
      <Sep />
      <Tool icon="up" />
      <Tool icon="down" />
      <Sep />
      <Tool icon="gInsert" label="插入" off />
      <Tool icon="gDelete" label="删除" off />
      <Tool icon="gScale" label="缩尺配筋" off />
      <Tool icon="info" label="钢筋信息" />
      <Tool icon="gallery" label="钢筋图库" />
      <Tool icon="other" label="其他" caret="menu" />
      <Tool label="关闭" />
      <Sep />
      <span className="ml-1 whitespace-nowrap">单构件钢筋总重(kg)：59.127</span>
    </Strip>
  )
}

function HookShape() {
  return (
    <svg viewBox="0 0 200 41" className="block h-[41px] w-[200px]">
      <path d="M30 6h21v27h96V6h21" fill="none" stroke="#000" strokeWidth="2" />
      <path d="M39 6l-3 8M155 3l-1 3 5 8" fill="none" stroke="#000" />
      <g fontSize="12">
        <text x="25" y="21">184</text>
        <text x="53" y="23">560</text>
        <text x="88" y="30">1420</text>
        <text x="127" y="23">560</text>
        <text x="153" y="21">184</text>
      </g>
    </svg>
  )
}

function SideShape() {
  return (
    <svg viewBox="0 0 200 33" className="block h-[33px] w-[200px]">
      <path d="M40 8v14h119V8" fill="none" stroke="#000" strokeWidth="2" />
      <g fontSize="12">
        <text x="19" y="20">180</text>
        <text x="88" y="19" fill="#f00">1420</text>
        <text x="162" y="20">180</text>
      </g>
    </svg>
  )
}

function Grade() {
  return (
    <svg viewBox="0 0 10 12" className="mx-auto h-3 w-2.5" aria-label="三级钢">
      <path d="M1.500 3.500h7v4h-7zM0 8.500h10M3.500 1v9.500M6.500 1v9.500" fill="none" stroke="#000" />
    </svg>
  )
}

const heads: [string, string][] = [
  ['', 'w-[33px]'],
  ['筋号', 'w-[73px]'],
  ['直径(mm)', 'w-[56px]'],
  ['级别', 'w-[36px]'],
  ['图号', 'w-[33px]'],
  ['图形', 'w-[201px]'],
  ['计算公式', 'w-[166px]'],
  ['公式描述', 'w-[156px]'],
  ['长度(mm)', 'w-[61px]'],
  ['根数', 'w-[38px]'],
  ['搭接', 'w-[39px]'],
  ['损耗(%)', 'w-[49px]'],
  ['单重(kg)', 'w-[61px]'],
  ['总重(kg)', 'w-[61px]'],
  ['钢筋归类', 'w-[70px]'],
]

const rows = [
  { name: '横向底筋.1', no: '705', formula: '260+184+300+1420+300+260+184', desc: '锚固+垂直长度+水平长度+垂直长度+锚固', len: '2908', n: '9', w: '2.582', total: '23.241' },
  { name: '纵向底筋.1', no: '705', formula: '260+184+300+1420+300+260+184', desc: '锚固+垂直长度+水平长度+垂直长度+锚固', len: '2908', n: '9', w: '2.582', total: '23.241' },
  { name: '侧面水平筋.1', no: '64', formula: '15*d+1420+15*d', desc: '锚固+水平长度+锚固', len: '1780', n: '8', w: '1.581', total: '12.645' },
]

function RebarTable() {
  const [current, setCurrent] = useState(0)
  const cell = 'border-r border-b border-[#c0c0c0] p-0 pl-px leading-3 break-all'
  return (
    <table className="w-[1133px] table-fixed border-separate border-spacing-0 text-left">
      <thead>
        <tr className="h-5">
          {heads.map(([h, w], i) => (
            <th
              key={i}
              scope="col"
              className={`border-r border-b border-[#c0c0c0] p-0 text-center leading-4 font-normal whitespace-nowrap ${w} ${
                i === 2 ? 'bg-linear-to-b from-[#f8d9a4] to-[#f1bf62] text-[#60004c]' : 'bg-linear-to-b from-white to-[#efefef]'
              }`}
            >
              {h}
            </th>
          ))}
        </tr>
      </thead>
      <tbody>
        {rows.map((r, i) => (
          <tr key={i} onClick={() => setCurrent(i)} className={`bg-[#ccffda] ${i < 2 ? 'h-[42px]' : 'h-[34px]'}`}>
            <th
              scope="row"
              className={`border-r border-b border-[#c0c0c0] p-0 text-center font-normal ${
                current === i ? 'bg-[#ffd28a] text-[#60004c]' : 'bg-linear-to-r from-white to-[#efefef] pr-2'
              }`}
            >
              {i + 1}{current === i && '*'}
            </th>
            <td className={`${cell} border-r-black`}>{r.name}</td>
            <td className={`${cell} ${current === i ? 'bg-[#aeebda]' : ''}`}>12</td>
            <td className={cell}><Grade /></td>
            <td className={cell}>{r.no}</td>
            <td className="border-r border-b border-[#c0c0c0] p-0">{i < 2 ? <HookShape /> : <SideShape />}</td>
            <td className={`${cell} pr-1.5`}>{r.formula}</td>
            <td className={cell}>{r.desc}</td>
            <td className={cell}>{r.len}</td>
            <td className={cell}>{r.n}</td>
            <td className={cell}>0</td>
            <td className={cell}>0</td>
            <td className={cell}>{r.w}</td>
            <td className={cell}>{r.total}</td>
            <td className={cell}>直筋</td>
          </tr>
        ))}
        <tr className="h-5">
          <th scope="row" className="border-r border-b border-[#c0c0c0] bg-linear-to-r from-white to-[#efefef] p-0 pr-2 text-center font-normal">4</th>
          {heads.slice(1).map(([h]) => (
            <td key={h} className={`${cell} ${h === '筋号' ? 'border-r-black' : ''}`} />
          ))}
        </tr>
      </tbody>
    </table>
  )
}

function DetailPanel() {
  return (
    <div className="flex h-[234px] shrink-0">
      <div className="flex w-[13px] shrink-0 flex-col items-center">
        <button type="button" aria-label="关闭钢筋编辑" className="flex h-2.5 w-2.5 items-center justify-center border border-[#333] bg-[#f2dede]">
          <svg viewBox="0 0 6 6" className="h-1.5 w-1.5"><path d="M0 0l6 6M6 0L0 6" stroke="#222" strokeWidth="1.300" /></svg>
        </button>
        <div className="mt-1 flex flex-1 gap-[3px]">
          <span className="border-l-2 border-dotted border-[#c4c4c4]" />
          <span className="border-l-2 border-dotted border-[#c4c4c4]" />
        </div>
      </div>
      <div className="flex min-w-0 flex-1 flex-col">
        <DetailToolbar />
        <div className={`mr-px flex min-h-0 flex-1 flex-col border border-[#a0a0a0] bg-white ${SONG}`}>
          <div className="min-h-0 flex-1 overflow-hidden">
            <RebarTable />
          </div>
          <div className="flex h-4 shrink-0 items-center bg-[#f0f0f0] px-1">
            <svg viewBox="0 0 9 9" className="h-[9px] w-[9px]"><path d="M6 1L2.500 4.500 6 8" fill="none" stroke="#505050" strokeWidth="1.500" /></svg>
            <div className="ml-1 h-full w-[65%] bg-[#cdcdcd]" />
            <svg viewBox="0 0 9 9" className="ml-auto h-[9px] w-[9px]"><path d="M3 1l3.500 3.500L3 8" fill="none" stroke="#505050" strokeWidth="1.500" /></svg>
          </div>
        </div>
      </div>
    </div>
  )
}

/* ---------- status bar, taskbar, floating tools ---------- */

function StatusBar() {
  const box = 'h-5 border border-[#d0d0d0] bg-[#f8f8f8] pl-px leading-[18px] whitespace-nowrap'
  return (
    <footer className={`flex h-6 shrink-0 gap-0.5 pt-1 ${SONG}`}>
      <span className={`${box} w-[148px]`}>X=140375 Y=10339</span>
      <span className={`${box} w-[78px]`}>层高:3.47m</span>
      <span className={`${box} w-[98px]`}>底标高:-3.5m</span>
      <span className={`${box} w-12`}>1(1)</span>
      <span className={`${box} flex-1`} />
    </footer>
  )
}

function SogouLogo({ className }: { className: string }) {
  return (
    <svg viewBox="0 0 28 28" className={className} aria-hidden="true">
      <path d="M2 5L22 1q3-.5 3.500 2L28 21q0 3-3 3.500L8 27q-3 .5-3.500-2L0 8q-.5-2.500 2-3z" fill="#f0511d" />
      <path d="M21 7c-4-3-12-2-12.500 2C8 14 20 12 20 17c0 4-8 5-13 1.500" fill="none" stroke="#fff" strokeWidth="4" />
    </svg>
  )
}

function ImeBar() {
  return (
    <div className="absolute right-0 bottom-10 flex h-[23px] items-center gap-1.5 border border-[#b9d0e0] bg-[#fafcff] pr-1 pl-[31px] text-[#1b74c8]">
      <SogouLogo className="absolute bottom-0 -left-0.5 h-7 w-7" />
      <span className="w-4 text-[15px] leading-5 font-bold">中</span>
      <svg viewBox="0 0 16 16" className="h-4 w-4"><circle cx="4" cy="6" r="2" fill="none" stroke="#1b74c8" strokeWidth="1.500" /><path d="M10 8h3v3l-2 3h-1l1-3h-1z" fill="#1b74c8" /></svg>
      <svg viewBox="0 0 12 16" className="h-4 w-3"><rect x="3.500" width="5" height="9" rx="2.500" fill="#1b74c8" /><path d="M1 6c0 7 10 7 10 0M6 11v4M3 15h6" fill="none" stroke="#1b74c8" strokeWidth="1.500" /></svg>
      <svg viewBox="0 0 16 12" className="ml-0.5 h-3 w-4"><rect x=".75" y=".75" width="14.500" height="10.500" rx="1" fill="none" stroke="#1b74c8" strokeWidth="1.500" /><path d="M3 4h10M3 6.500h10M4 9h8" stroke="#1b74c8" strokeWidth="1.500" strokeDasharray="1.500 1" /></svg>
      <svg viewBox="0 0 16 16" className="h-4 w-4" fill="#b8c4d8"><circle cx="6" cy="4" r="3" /><path d="M0 13c0-4 2-5 6-5l2 1v4z" /><text x="6" y="15" fontSize="9" fontWeight="bold" fill="#93a3bf">17</text></svg>
      <svg viewBox="0 0 16 16" className="h-4 w-4"><path d="M5 2c1 2 5 2 6 0l4.500 2-1.500 4-2-.5V14H4V7.500L2 8 .5 4z" fill="#1b74c8" /></svg>
      <svg viewBox="0 0 16 16" className="h-4 w-4"><path d="M2 14l7-7" stroke="#1b74c8" strokeWidth="3" strokeLinecap="round" /><path d="M14.500 4.500l-3 2-2-2 2-3c-3-.5-5 2-4 4.500 1 2.500 4 3 5.500 1.500s1.800-2 1.500-3z" fill="#1b74c8" /></svg>
    </div>
  )
}

function SpeedBall() {
  return (
    <div className="absolute top-1 left-[735px] flex items-center">
      <div className="relative z-10 flex h-12 w-12 items-center justify-center rounded-full border-2 border-[#9a9a9a] bg-white p-0.5">
        <div className="flex h-full w-full items-center justify-center rounded-full bg-linear-to-b from-[#1a7a4a] from-30% to-[#3ecb55] to-32% text-[14px] text-white">70%</div>
      </div>
      <div className="-ml-6 flex h-[38px] w-[103px] items-center rounded-full border border-[#b5b5b5] bg-linear-to-b from-[#ededed] to-[#dcdcdc] pl-[27px] text-[10px] shadow">
        <ul className="shrink-0 leading-[15px]">
          <li className="flex items-center"><svg viewBox="0 0 6 8" className="mr-2 h-2 w-1.5"><path d="M3 0l3 3.500H0zM2.300 3h1.400v5H2.300z" fill="#e8553a" /></svg>0.04K/s</li>
          <li className="flex items-center"><svg viewBox="0 0 6 8" className="mr-2 h-2 w-1.5"><path d="M3 8l3-3.500H0zM2.300 0h1.400v5H2.300z" fill="#2fa05a" /></svg>0.04K/s</li>
        </ul>
        <svg viewBox="0 0 18 18" className="ml-0.5 h-[18px] w-[18px] shrink-0"><circle cx="9" cy="9" r="8.500" fill="#3a7fe0" /><path d="M9 4.500v9M4.500 9h9" stroke="#fff" strokeWidth="2" /></svg>
      </div>
    </div>
  )
}

const swirl = 'M20 3c-2 3-6 1-10 4-5 4-3 13 4 13 6 0 8-6 5-9-2-2-6-1-6 2 0 2 2 3 4 2-2 2-6 1-6-3 0-5 6-6 9-3 5 5 1 14-7 14C4 23-1 13 5 6 9 2 15 4 20 3z'

const apps: { name: string; art: ReactNode; open?: boolean; active?: boolean }[] = [
  {
    name: '应用',
    art: (
      <g fill="#e6e6e6">
        <path d="M11.500 12C4 14 0 10 1 5c2-5 9-5 11 0zM12 11.500C10 4 14 0 19 1c5 2 5 9 0 11zM12.500 12c7.500-2 11.500 2 10.500 7-2 5-9 5-11 0zM12 12.500c2 7.500-2 11.500-7 10.500-5-2-5-9 0-11z" stroke="#030c10" />
      </g>
    ),
  },
  {
    name: '提醒',
    art: (
      <>
        <path d="M14 6C8 3 1 7 2 14c1 7 10 9 14 4M16 10c-5-3-10 0-9 4s7 4 8 1-4-4-5-1" fill="none" stroke="#ccc" strokeWidth="1.500" />
        <path d="M18 0c3 0 4 3 4 6l2 3H12l2-3c0-3 1-6 4-6zM16 10h4l-2 2z" fill="#eeb111" />
      </>
    ),
  },
  {
    name: 'Edge',
    art: <path d="M2 11C3 4 8 1 13 1c6 0 10 4 10 10v3H8c0 5 8 6 13 3v5c-6 3-17 2-17-7 0-5 4-8 8-8-2 1-4 2-4 4h8c0-6-10-6-14 0z" fill="#0a78d6" />,
  },
  {
    name: '应用商店',
    art: (
      <>
        <path d="M2 6h20v17H2z" fill="#fff" />
        <path d="M8 6c0-6 8-6 8 0" fill="none" stroke="#fff" strokeWidth="1.500" />
        <path d="M7 10h4.500v4H7zM12.500 10H17v4h-4.500zM7 15h4.500v4H7zM12.500 15H17v4h-4.500z" fill="#111" />
      </>
    ),
  },
  {
    name: '文件资源管理器',
    art: (
      <>
        <path d="M1 3h8l2 2h12v16H1z" fill="#ffe08a" />
        <path d="M1 3h8v2H1z" fill="#e9ae32" />
        <path d="M5 21v-9h14v9h-4v-4H9v4z" fill="#3fb0e8" />
      </>
    ),
  },
  { name: '广联达', art: <path d={swirl} fill="#2a9df4" stroke="#2a9df4" strokeWidth="1.500" />, open: true },
  {
    name: '浏览器',
    art: (
      <>
        <circle cx="12" cy="12" r="10.500" fill="#5cc431" stroke="#e8f5e0" />
        <path d="M18 16c-4 4-11 2-11-4 0-7 10-8 11-.5H8" fill="none" stroke="#fff" strokeWidth="2.500" />
      </>
    ),
    open: true,
  },
  {
    name: '广联达计价',
    art: (
      <>
        <path d={swirl} fill="#3591b8" stroke="#3591b8" strokeWidth="1.500" />
        <path d="M2 9l14 12-1 3H8C3 21 0 15 2 9z" fill="#e8636d" />
      </>
    ),
    open: true,
  },
  {
    name: '记事',
    art: (
      <>
        <rect x="1" y="1" width="22" height="22" rx="2" fill="#f0a21c" stroke="#ffd98a" />
        <path d="M4 6h12l2 14H5z" fill="#fff8e8" />
        <path d="M6 10h8M6 13h8M7 16h7" stroke="#b58a4a" />
        <path d="M21 2l-9 14" stroke="#9a3a12" strokeWidth="2.500" />
      </>
    ),
    open: true,
  },
  { name: 'GGJ2013', art: null, open: true, active: true },
]

function Taskbar() {
  return (
    <div className="flex h-10 shrink-0 items-stretch bg-[#030c10] text-white">
      <button type="button" aria-label="开始" className="flex w-12 shrink-0 items-center justify-center bg-black">
        <svg viewBox="0 0 16 16" className="h-4 w-4"><path d="M0 2.300L6.500 1.400v6.100H0zM7.300 1.300L16 0v7.500H7.300zM0 8.300h6.500v6.200L0 13.600zM7.300 8.300H16V16l-8.700-1.300z" fill="#fff" /></svg>
      </button>
      <label className="flex w-[344px] shrink-0 items-center bg-[#333] pl-2">
        <svg viewBox="0 0 24 24" className="h-6 w-6 shrink-0" aria-hidden="true"><circle cx="12" cy="12" r="9" fill="none" stroke="#f4f4f4" strokeWidth="3" /></svg>
        <input aria-label="搜索" placeholder="在这里输入你要搜索的内容" className="ml-1 w-full min-w-0 bg-transparent text-[14px] outline-none placeholder:text-[#9a9a9a]" />
        <svg viewBox="0 0 12 16" className="mr-3.5 h-4 w-3 shrink-0" aria-hidden="true"><path d="M4 .5h4v9H4zM1 7v5h10V7M6 12v3.500M3.500 15.500h5" fill="none" stroke="#9a9a9a" /></svg>
      </label>
      <div className="ml-0.5 flex shrink-0">
        {apps.map((a, i) => (
          <div key={a.name} className="flex">
            {i === 2 && <span className="mr-2.5 ml-2 my-3 w-1.5 border-x border-[#333c40]" />}
            <button
              type="button"
              aria-label={a.name}
              className={`relative flex w-[49px] items-center justify-center ${a.active ? 'bg-[#363f43]' : ''}`}
            >
              {a.art ? <svg viewBox="0 0 24 24" className="h-[22px] w-[22px]">{a.art}</svg> : <GLogo className="h-6 w-6" />}
              {a.open && <span className={`absolute bottom-0 h-0.5 bg-[#76b9ed] ${a.active ? 'inset-x-0' : 'inset-x-1'}`} />}
            </button>
          </div>
        ))}
      </div>
      <div className="ml-auto flex shrink-0 items-center">
        <div className="w-20 text-center leading-[17px]">34%<br />CPU使用</div>
        <svg viewBox="0 0 12 12" className="ml-1 h-3 w-3"><path d="M1 8.500l5-5 5 5" fill="none" stroke="#fff" strokeWidth="1.200" /></svg>
        <svg viewBox="0 0 18 14" className="ml-2.5 h-3.5 w-[18px]"><path d="M5.500 4.500h10v6h-10zM16.500 6.500v2M1 2.500h5v2.500H1zM2 1v1.500M5 1v1.500M3.500 5v3" fill="none" stroke="#fff" /><path d="M7 6h7v3H7z" fill="#fff" /></svg>
        <svg viewBox="0 0 14 14" className="ml-2 h-3.5 w-3.5"><path d="M1 9c3-4 8-7 12-8M3 11c2-4 6-6 10-7M5.500 12c1-3 4-5 7.500-5.500M8 13c1-2 2.500-3 5-3.500" fill="none" stroke="#bbb" strokeWidth="1.200" /><path d="M10 13l3-3v3z" fill="#fff" /></svg>
        <svg viewBox="0 0 17 14" className="ml-1.5 h-3.5 w-[17px]"><path d="M1 5h3l4-3.500v11L4 9H1z" fill="none" stroke="#fff" /><path d="M10 5c1.500 1 1.500 3 0 4" fill="none" stroke="#fff" /><path d="M12 3c3 2 3 6 0 8M14 1c4 3 4 9 0 12" fill="none" stroke="#777" /></svg>
        <span className="ml-2 text-[14px]">中</span>
        <SogouLogo className="ml-3.5 h-4 w-4" />
        <div className="w-[94px] text-center leading-[18px]">12:07<br />2017/8/22</div>
        <button type="button" aria-label="2 条新通知" className="relative h-6 w-7">
          <svg viewBox="0 0 28 24" className="h-6 w-7">
            <path d="M1 2h16v12H9l-4 4v-4H1z" fill="#fff" /><path d="M4 5.500h10M4 8h10M4 10.500h10" stroke="#111" />
            <circle cx="17" cy="16" r="7.500" fill="#4a4a4a" stroke="#888" />
          </svg>
          <span className="absolute top-2 left-3.5 font-bold">2</span>
        </button>
        <span className="ml-2.5 h-10 w-[5px] border-l border-[#444]" />
      </div>
    </div>
  )
}

export default function App() {
  return (
    <div className="relative flex h-screen flex-col overflow-hidden bg-[#f0f0f0] font-['Open_Sans','Noto_Sans_CJK_SC',sans-serif] text-xs text-black">
      <TitleBar />
      <MenuBar />
      <MainToolbar />
      <div className="flex min-h-0 flex-1 gap-1">
        <NavPanel />
        <div className="flex min-w-0 flex-1 flex-col">
          <EditToolbars />
          <Viewport />
          <SnapBar />
          <DetailPanel />
        </div>
      </div>
      <StatusBar />
      <Taskbar />
      <ImeBar />
      <SpeedBall />
    </div>
  )
}
